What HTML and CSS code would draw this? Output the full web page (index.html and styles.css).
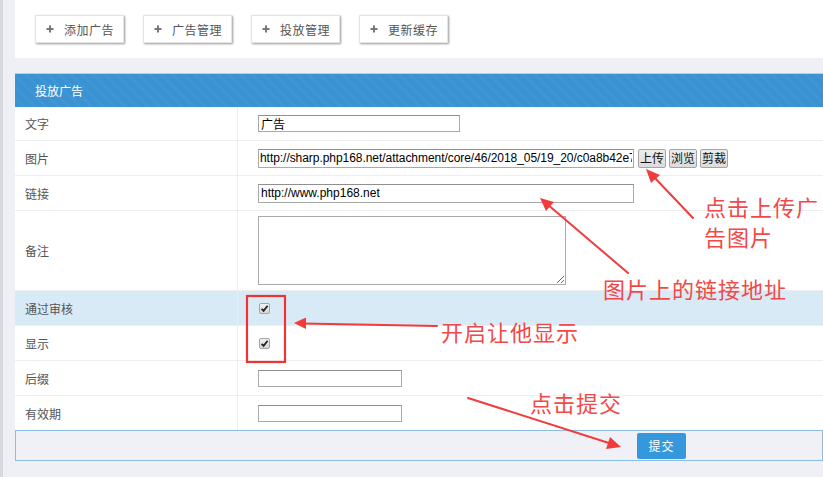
FILE: index.html
```html
<!DOCTYPE html>
<html lang="zh">
<head>
<meta charset="utf-8">
<title>投放广告</title>
<link rel="stylesheet" href="styles.css">
</head>
<body>
<div class="page">
  <div class="toolbar">
    <a class="tool-btn"><svg class="plus" viewBox="0 0 8 8"><path d="M4 0.5V7.5M0.5 4H7.5"/></svg><span>添加广告</span></a>
    <a class="tool-btn"><svg class="plus" viewBox="0 0 8 8"><path d="M4 0.5V7.5M0.5 4H7.5"/></svg><span>广告管理</span></a>
    <a class="tool-btn"><svg class="plus" viewBox="0 0 8 8"><path d="M4 0.5V7.5M0.5 4H7.5"/></svg><span>投放管理</span></a>
    <a class="tool-btn"><svg class="plus" viewBox="0 0 8 8"><path d="M4 0.5V7.5M0.5 4H7.5"/></svg><span>更新缓存</span></a>
  </div>

  <div class="panel">
    <div class="panel-head">投放广告</div>
    <div class="row row-first">
      <div class="label">文字</div>
      <div class="field"><input class="inp inp-text" type="text" value="广告"></div>
    </div>
    <div class="row">
      <div class="label">图片</div>
      <div class="field">
        <input class="inp inp-url inp-pic" type="text" value="http://sharp.php168.net/attachment/core/46/2018_05/19_20/c0a8b42e76a0b31e.jpg">
        <button class="win-btn">上传</button>
        <button class="win-btn">浏览</button>
        <button class="win-btn">剪裁</button>
      </div>
    </div>
    <div class="row">
      <div class="label">链接</div>
      <div class="field"><input class="inp inp-url" type="text" value="http://www.php168.net"></div>
    </div>
    <div class="row row-tall">
      <div class="label">备注</div>
      <div class="field"><textarea class="area"></textarea></div>
    </div>
    <div class="row row-hl">
      <div class="label">通过审核</div>
      <div class="field"><span class="chk"><svg viewBox="0 0 9 9"><path d="M1.6 4.8L3.6 6.8L7.6 1.8"/></svg></span></div>
    </div>
    <div class="row">
      <div class="label">显示</div>
      <div class="field"><span class="chk"><svg viewBox="0 0 9 9"><path d="M1.6 4.8L3.6 6.8L7.6 1.8"/></svg></span></div>
    </div>
    <div class="row">
      <div class="label">后缀</div>
      <div class="field"><input class="inp inp-short" type="text" value=""></div>
    </div>
    <div class="row row-last">
      <div class="label">有效期</div>
      <div class="field"><input class="inp inp-short" type="text" value=""></div>
    </div>
    <div class="panel-foot"><button class="submit">提交</button></div>
  </div>

  <svg class="marks" width="823" height="477" viewBox="0 0 823 477">
    <rect x="244" y="296" width="38" height="66" fill="none" stroke="#f03232" stroke-width="2.2"/>
    <g stroke="#f23c3c" stroke-width="2" fill="#f23c3c" stroke-linecap="round">
      <line x1="690" y1="218" x2="650" y2="176"/>
      <polygon stroke="none" points="643,169 657,175 648,183"/>
      <line x1="625" y1="273" x2="544" y2="204"/>
      <polygon stroke="none" points="537,198 551,202 543,211"/>
      <line x1="434" y1="326" x2="300" y2="323.5"/>
      <polygon stroke="none" points="291,323 303,317.5 303,329"/>
      <line x1="465" y1="398" x2="609" y2="444"/>
      <polygon stroke="none" points="618,447 603,449 607,437"/>
    </g>
  </svg>
  <div class="note note-upload">点击上传广<br>告图片</div>
  <div class="note note-link">图片上的链接地址</div>
  <div class="note note-show">开启让他显示</div>
  <div class="note note-submit">点击提交</div>
</div>
</body>
</html>
```

FILE: styles.css
```css
* { box-sizing: border-box; }
html, body {
  margin: 0;
  padding: 0;
  background: #eef0f5;
  overflow: hidden;
}
body {
  font-family: "Noto Sans CJK SC", "Noto Sans", sans-serif;
  font-size: 12px;
  color: #555;
}
.page {
  position: relative;
  width: 823px;
  height: 477px;
  border-left: 3px solid #d8d9dd;
  padding-left: 12px;
}
.toolbar {
  background: #fff;
  height: 58px;
  padding: 15px 20px;
  display: flex;
  gap: 19px;
}
.tool-btn {
  display: flex;
  align-items: center;
  width: 89px;
  height: 28px;
  background: #fff;
  border: 1px solid #e4e4e4;
  box-shadow: 1px 1px 2px rgba(0, 0, 0, 0.4);
  padding-left: 10px;
  color: #555;
  font-size: 12px;
  letter-spacing: 0.5px;
}
.plus {
  width: 8px;
  height: 8px;
  margin-right: 10px;
}
.plus path {
  stroke: #777;
  stroke-width: 2;
  fill: none;
}
.panel {
  margin-top: 15px;
  background: #fff;
}
.panel-head {
  height: 34px;
  border-top: 1px solid #b8d0e6;
  background-color: #3a92d2;
  background-image: repeating-linear-gradient(45deg, #3a92d2 0, #3a92d2 5px, #3e96d5 5px, #3e96d5 8px);
  color: #fff;
  padding-left: 20px;
  display: flex;
  align-items: center;
  font-size: 12px;
}
.row {
  display: grid;
  grid-template-columns: 223px 1fr;
  height: 35px;
  border-bottom: 1px solid #eeeeee;
}
.row-first { height: 34px; }
.row-tall { height: 80px; }
.row-hl { background: #d9eaf7; }
.row-last { border-bottom: none; height: 34px; }
.label {
  border-right: 1px solid #eeeeee;
  padding-left: 10px;
  display: flex;
  align-items: center;
  color: #555;
}
.field {
  padding-left: 20px;
  display: flex;
  align-items: center;
  gap: 3px;
}
.inp {
  border: 1px solid #a9a9a9;
  border-top-color: #8f8f8f;
  font-family: "Liberation Sans", "Noto Sans CJK SC", sans-serif;
  font-size: 12px;
  color: #000;
  padding: 0 2px;
  margin: 0;
  outline: none;
  background: #fff;
}
.inp-text { width: 202px; height: 17px; }
.inp-url { width: 376px; height: 19px; }
.inp-pic { padding: 0 1px; letter-spacing: -0.05px; }
.inp-short { width: 144px; height: 17px; }
.win-btn {
  width: 28px;
  height: 19px;
  margin: 0;
  padding: 0;
  border: 1px solid #a4a4a4;
  border-radius: 2px;
  background: linear-gradient(#ededed, #dcdcdc);
  font-family: "Noto Sans CJK SC", sans-serif;
  font-size: 12px;
  line-height: 16px;
  color: #111;
}
.win-btn:first-of-type { margin-left: 1px; }
.area {
  width: 308px;
  height: 69px;
  margin: 0;
  border: 1px solid #a9a9a9;
  resize: both;
  outline: none;
}
.chk {
  width: 11px;
  height: 11px;
  margin-left: 1px;
  border: 1px solid #a5a5a5;
  border-radius: 2px;
  background: linear-gradient(#f2f2f2, #d6d6d6);
  display: flex;
  align-items: center;
  justify-content: center;
}
.chk svg { width: 9px; height: 9px; }
.chk path {
  fill: none;
  stroke: #222;
  stroke-width: 1.8;
}
.panel-foot {
  height: 31px;
  border: 1px solid #8bbce6;
  background: #eff1f6;
  padding-left: 621px;
  display: flex;
  align-items: center;
}
.submit {
  width: 49px;
  height: 26px;
  margin: 0;
  border: none;
  border-radius: 2px;
  background: #3598dc;
  color: #fff;
  font-family: "Noto Sans CJK SC", sans-serif;
  font-size: 12px;
  letter-spacing: 1px;
}
.marks {
  position: absolute;
  left: 0;
  top: 0;
  pointer-events: none;
}
.note {
  position: absolute;
  color: #f24848;
  font-family: "Noto Sans CJK SC", sans-serif;
  font-size: 22px;
  line-height: 30px;
  letter-spacing: 1px;
  white-space: nowrap;
}
.note-upload { left: 701px; top: 191px; }
.note-link { left: 600px; top: 273px; }
.note-show { left: 438px; top: 316px; }
.note-submit { left: 527px; top: 387px; }
```
